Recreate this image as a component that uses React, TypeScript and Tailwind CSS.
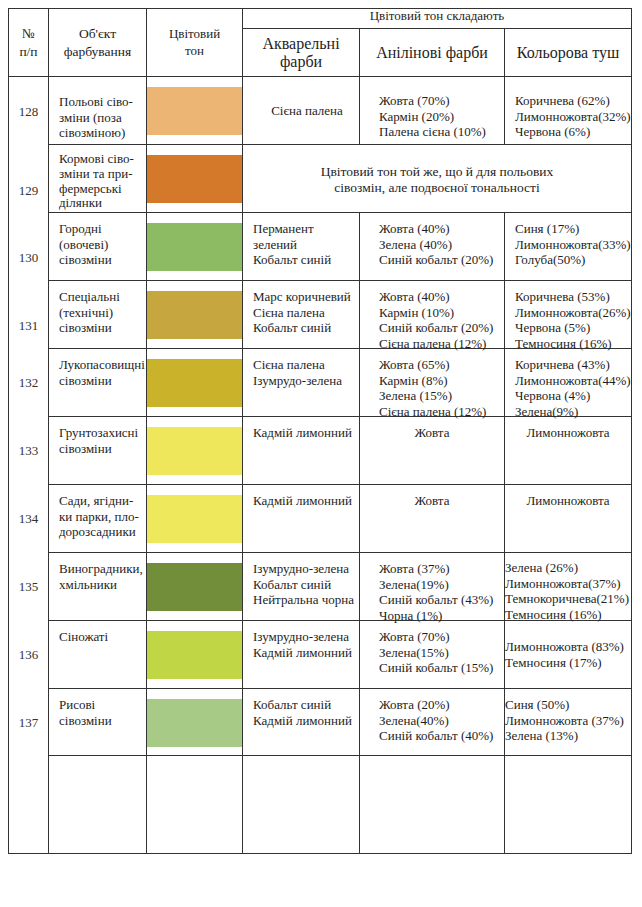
import React from "react"

type Row = {
  n: string
  numShift?: string
  obj: string[]
  objPt?: string
  color: string
  aq?: string[]
  an?: string[]
  ts?: string[]
  aqClass?: string
  anClass?: string
  tsClass?: string
  merged?: string[]
}

const rows: Row[] = [
  {
    n: "128",
    numShift: "pt-[2px]",
    obj: ["Польові сіво-", "зміни (поза", "сівозміною)"],
    objPt: "pt-[17px]",
    color: "bg-[#ecb574]",
    aq: ["Сієна палена"],
    aqClass: "items-center justify-center pl-[12px]",
    an: ["Жовта (70%)", "Кармін (20%)", "Палена сієна (10%)"],
    anClass: "pt-[16px] pl-[19px]",
    ts: ["Коричнева (62%)", "Лимонножовта(32%)", "Червона (6%)"],
    tsClass: "pt-[16px] pl-[10px]",
  },
  {
    n: "129",
    numShift: "pt-[23px]",
    obj: ["Кормові сіво-", "зміни та при-", "фермерські", "ділянки"],
    objPt: "pt-[7px] leading-[14.8px]",
    color: "bg-[#d4792a]",
    merged: ["Цвітовий тон той же, що й для польових", "сівозмін, але подвоєної тональності"],
  },
  {
    n: "130",
    numShift: "pt-[21px]",
    obj: ["Городні", "(овочеві)", "сівозміни"],
    color: "bg-[#8dbb63]",
    aq: ["Перманент", "зелений", "Кобальт синій"],
    an: ["Жовта (40%)", "Зелена (40%)", "Синій кобальт (20%)"],
    ts: ["Синя (17%)", "Лимонножовта(33%)", "Голуба(50%)"],
  },
  {
    n: "131",
    numShift: "pt-[21px]",
    obj: ["Спеціальні", "(технічні)", "сівозміни"],
    color: "bg-[#c6a63e]",
    aq: ["Марс коричневий", "Сієна палена", "Кобальт синій"],
    an: ["Жовта (40%)", "Кармін (10%)", "Синій кобальт (20%)", "Сієна палена (12%)"],
    ts: ["Коричнева (53%)", "Лимонножовта(26%)", "Червона (5%)", "Темносиня (16%)"],
  },
  {
    n: "132",
    obj: ["Лукопасовищні", "сівозміни"],
    color: "bg-[#cab22b]",
    aq: ["Сієна палена", "Ізумрудо-зелена"],
    an: ["Жовта (65%)", "Кармін (8%)", "Зелена (15%)", "Сієна палена (12%)"],
    ts: ["Коричнева (43%)", "Лимонножовта(44%)", "Червона (4%)", "Зелена(9%)"],
  },
  {
    n: "133",
    obj: ["Грунтозахисні", "сівозміни"],
    color: "bg-[#eee65b]",
    aq: ["Кадмій лимонний"],
    an: ["Жовта"],
    anClass: "items-center pt-[8px]",
    ts: ["Лимонножовта"],
    tsClass: "items-center pt-[8px]",
  },
  {
    n: "134",
    obj: ["Сади, ягідни-", "ки парки, пло-", "дорозсадники"],
    color: "bg-[#eee85c]",
    aq: ["Кадмій лимонний"],
    an: ["Жовта"],
    anClass: "items-center pt-[8px]",
    ts: ["Лимонножовта"],
    tsClass: "items-center pt-[8px]",
  },
  {
    n: "135",
    obj: ["Виноградники,", "хмільники"],
    color: "bg-[#728e3a]",
    aq: ["Ізумрудно-зелена", "Кобальт синій", "Нейтральна чорна"],
    an: ["Жовта (37%)", "Зелена(19%)", "Синій кобальт (43%)", "Чорна (1%)"],
    ts: ["Зелена (26%)", "Лимонножовта(37%)", "Темнокоричнева(21%)", "Темносиня (16%)"],
    tsClass: "pt-[7px] pl-0",
  },
  {
    n: "136",
    obj: ["Сіножаті"],
    color: "bg-[#c1d645]",
    aq: ["Ізумрудно-зелена", "Кадмій лимонний"],
    an: ["Жовта (70%)", "Зелена(15%)", "Синій кобальт (15%)"],
    ts: ["Лимонножовта (83%)", "Темносиня (17%)"],
    tsClass: "justify-center pl-0",
  },
  {
    n: "137",
    obj: ["Рисові", "сівозміни"],
    color: "bg-[#a7cb87]",
    aq: ["Кобальт синій", "Кадмій лимонний"],
    an: ["Жовта (20%)", "Зелена(40%)", "Синій кобальт (40%)"],
    ts: ["Синя (50%)", "Лимонножовта (37%)", "Зелена (13%)"],
    tsClass: "pt-[8px] pl-0",
  },
]

const cell = "border-r border-b border-[#333]"

function Lines({ items }: { items: string[] }) {
  return (
    <>
      {items.map((t) => (
        <div key={t} className="whitespace-nowrap">
          {t}
        </div>
      ))}
    </>
  )
}

export default function App() {
  return (
    <div className="min-h-[907px] bg-white pl-[8px] pt-[8px] text-[#1e1e1e]" style={{ fontFamily: '"Liberation Serif", "Times New Roman", serif' }}>
      <div className="grid w-[624px] grid-cols-[40px_98px_96px_117px_145px_127px] grid-rows-[20px_48px_repeat(9,68px)_67px_98px] border-l border-t border-[#333] text-[13px] leading-[15.6px]">
        {/* header */}
        <div className={`${cell} row-span-2 flex flex-col items-center justify-center text-[13.5px] leading-[18px]`}>
          <div>№</div>
          <div>п/п</div>
        </div>
        <div className={`${cell} row-span-2 flex flex-col items-center justify-center text-[13.5px] leading-[18px]`}>
          <div>Об'єкт</div>
          <div>фарбування</div>
        </div>
        <div className={`${cell} row-span-2 flex flex-col items-center justify-start pt-[16px] leading-[17px]`}>
          <div>Цвітовий</div>
          <div>тон</div>
        </div>
        <div className={`${cell} col-span-3 text-center leading-[13px]`}>Цвітовий тон складають</div>
        <div className={`${cell} flex flex-col items-center justify-center text-[16px] leading-[18px]`}>
          <div>Акварельні</div>
          <div>фарби</div>
        </div>
        <div className={`${cell} flex items-center justify-center text-[16px]`}>Анілінові фарби</div>
        <div className={`${cell} flex items-center justify-center text-[16px]`}>Кольорова туш</div>

        {rows.map((r) => (
          <React.Fragment key={r.n}>
            <div className={`border-r border-[#333] flex items-center justify-center text-[#333] ${r.numShift ?? ""}`}>
              {r.n}
            </div>
            <div className={`${cell} pl-[10px] ${r.objPt ?? "pt-[8px]"}`}>
              <Lines items={r.obj} />
            </div>
            <div className={`${cell}`}>
              <div className={`mt-[10px] h-[48px] ${r.color}`} />
            </div>
            {r.merged ? (
              <div className={`${cell} col-span-3 pt-[19px] text-center text-[13.5px] leading-[16px]`}>
                <Lines items={r.merged} />
              </div>
            ) : (
              <>
                <div className={`${cell} flex flex-col ${r.aqClass ?? "pt-[8px] pl-[10px]"}`}>
                  <Lines items={r.aq ?? []} />
                </div>
                <div className={`${cell} flex flex-col ${r.anClass ?? "pt-[8px] pl-[19px]"}`}>
                  <Lines items={r.an ?? []} />
                </div>
                <div className={`${cell} flex flex-col ${r.tsClass ?? "pt-[8px] pl-[10px]"}`}>
                  <Lines items={r.ts ?? []} />
                </div>
              </>
            )}
          </React.Fragment>
        ))}

        {/* empty last row */}
        <div className={cell} />
        <div className={cell} />
        <div className={cell} />
        <div className={cell} />
        <div className={cell} />
        <div className={cell} />
      </div>
    </div>
  )
}
